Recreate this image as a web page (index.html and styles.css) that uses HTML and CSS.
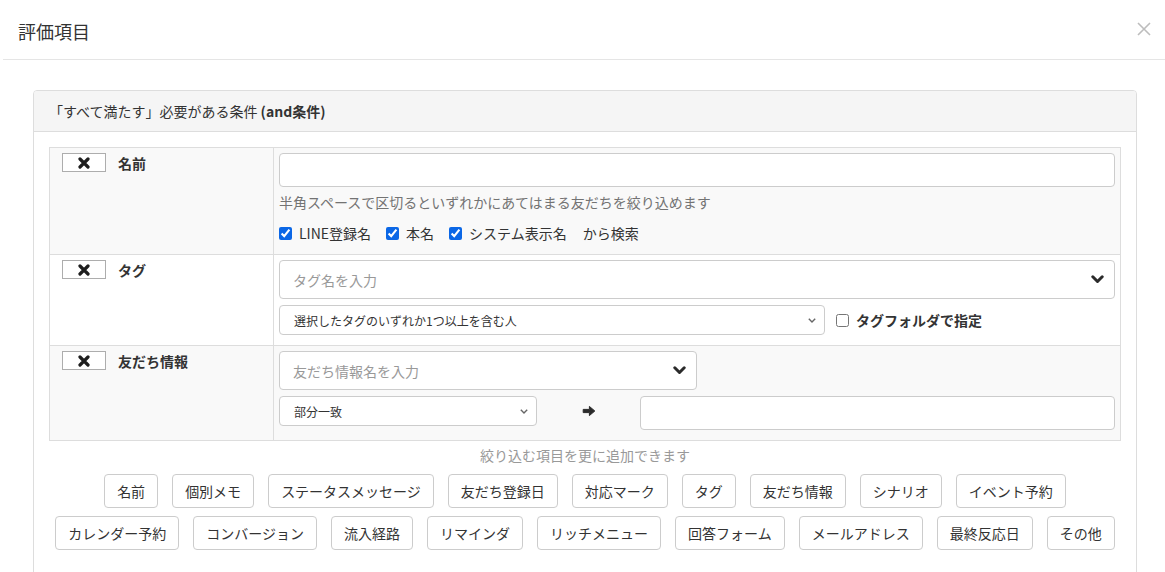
FILE: index.html
```html
<!DOCTYPE html>
<html lang="ja">
<head>
<meta charset="utf-8">
<title>評価項目</title>
<link rel="stylesheet" href="styles.css">
</head>
<body>
<div class="modal">
  <div class="modal-header">
    <h4 class="modal-title">評価項目</h4>
    <button class="close" type="button" aria-label="close">
      <svg width="14" height="14" viewBox="0 0 14 14"><path d="M1 1L13 13M13 1L1 13" stroke="#bdbdbd" stroke-width="1.6" fill="none"/></svg>
    </button>
  </div>
  <div class="modal-body">
    <div class="panel">
      <div class="panel-heading">「すべて満たす」必要がある条件 <b>(and条件)</b></div>
      <div class="panel-body">
        <div class="cond-table">
          <div class="cond-row striped">
            <div class="cond-label">
              <button class="btn-remove" type="button"><svg width="12" height="12" viewBox="0 0 12 12"><path d="M2 2L10 10M10 2L2 10" stroke="#1e1e1e" stroke-width="3.2" stroke-linecap="round" fill="none"/></svg></button>
              <span>名前</span>
            </div>
            <div class="cond-field first">
              <input class="form-control" type="text">
              <p class="help">半角スペースで区切るといずれかにあてはまる友だちを絞り込めます</p>
              <div class="check-row">
                <label class="check"><input type="checkbox" checked>LINE登録名</label>
                <label class="check"><input type="checkbox" checked>本名</label>
                <label class="check"><input type="checkbox" checked>システム表示名</label>
                <span class="from">から検索</span>
              </div>
            </div>
          </div>

          <div class="cond-row">
            <div class="cond-label">
              <button class="btn-remove" type="button"><svg width="12" height="12" viewBox="0 0 12 12"><path d="M2 2L10 10M10 2L2 10" stroke="#1e1e1e" stroke-width="3.2" stroke-linecap="round" fill="none"/></svg></button>
              <span>タグ</span>
            </div>
            <div class="cond-field">
              <div class="select2">
                <span>タグ名を入力</span>
                <svg width="13" height="9" viewBox="0 0 13 9"><path d="M1.8 1.8L6.5 6.5L11.2 1.8" fill="none" stroke="#2b2b2b" stroke-width="3" stroke-linecap="round" stroke-linejoin="round"/></svg>
              </div>
              <div class="line center">
                <div class="select-box select-tag">
                  <select><option>選択したタグのいずれか1つ以上を含む人</option></select>
                  <svg width="8" height="5" viewBox="0 0 8 5"><path d="M0.8 0.8L4 4L7.2 0.8" fill="none" stroke="#666" stroke-width="1.4"/></svg>
                </div>
                <label class="check check-folder"><input type="checkbox">タグフォルダで指定</label>
              </div>
            </div>
          </div>

          <div class="cond-row striped">
            <div class="cond-label">
              <button class="btn-remove" type="button"><svg width="12" height="12" viewBox="0 0 12 12"><path d="M2 2L10 10M10 2L2 10" stroke="#1e1e1e" stroke-width="3.2" stroke-linecap="round" fill="none"/></svg></button>
              <span>友だち情報</span>
            </div>
            <div class="cond-field">
              <div class="select2 half">
                <span>友だち情報名を入力</span>
                <svg width="13" height="9" viewBox="0 0 13 9"><path d="M1.8 1.8L6.5 6.5L11.2 1.8" fill="none" stroke="#2b2b2b" stroke-width="3" stroke-linecap="round" stroke-linejoin="round"/></svg>
              </div>
              <div class="line top">
                <div class="select-box select-op">
                  <select><option>部分一致</option></select>
                  <svg width="8" height="5" viewBox="0 0 8 5"><path d="M0.8 0.8L4 4L7.2 0.8" fill="none" stroke="#666" stroke-width="1.4"/></svg>
                </div>
                <div class="arrow">
                  <svg width="14" height="12" viewBox="0 0 14 12"><path d="M1.2 4.4H7.4V1.4L12.8 6L7.4 10.6V7.6H1.2Z" fill="#2b2b2b" stroke="#2b2b2b" stroke-width="1" stroke-linejoin="round"/></svg>
                </div>
                <input class="form-control value-input" type="text">
              </div>
            </div>
          </div>
        </div>

        <p class="add-hint">絞り込む項目を更に追加できます</p>
        <div class="add-buttons">
          <button class="btn" type="button">名前</button>
          <button class="btn" type="button">個別メモ</button>
          <button class="btn" type="button">ステータスメッセージ</button>
          <button class="btn" type="button">友だち登録日</button>
          <button class="btn" type="button">対応マーク</button>
          <button class="btn" type="button">タグ</button>
          <button class="btn" type="button">友だち情報</button>
          <button class="btn" type="button">シナリオ</button>
          <button class="btn" type="button">イベント予約</button>
          <button class="btn" type="button">カレンダー予約</button>
          <button class="btn" type="button">コンバージョン</button>
          <button class="btn" type="button">流入経路</button>
          <button class="btn" type="button">リマインダ</button>
          <button class="btn" type="button">リッチメニュー</button>
          <button class="btn" type="button">回答フォーム</button>
          <button class="btn" type="button">メールアドレス</button>
          <button class="btn" type="button">最終反応日</button>
          <button class="btn" type="button">その他</button>
        </div>
      </div>
    </div>
  </div>
</div>
</body>
</html>
```

FILE: styles.css
```css
html, body {
  margin: 0;
  padding: 0;
  overflow: hidden;
  background: #fff;
}

body {
  font-family: "Noto Sans CJK JP", "Noto Sans", sans-serif;
  font-size: 14px;
  line-height: 20px;
  color: #333;
}

.modal {
  margin-left: 3px;
  width: 1164px;
}

.modal-header {
  height: 59px;
  border-bottom: 1px solid #e5e5e5;
  display: flex;
  justify-content: space-between;
  align-items: flex-start;
  padding: 0 16px 0 15px;
}

.modal-title {
  margin: 18px 0 0;
  font-size: 18px;
  font-weight: normal;
  line-height: 26px;
}

.close {
  margin-top: 22px;
  width: 14px;
  height: 14px;
  padding: 0;
  border: 0;
  background: none;
  display: flex;
}

.modal-body {
  padding: 30px 30px 0;
}

.panel {
  border: 1px solid #ddd;
  border-radius: 4px;
  min-height: 600px;
}

.panel-heading {
  background: #f5f5f5;
  border-bottom: 1px solid #ddd;
  border-radius: 3px 3px 0 0;
  padding: 10px 15px;
}

.panel-body {
  padding: 15px;
}

.cond-table {
  border: 1px solid #ddd;
}

.cond-row {
  display: grid;
  grid-template-columns: 224px 1fr;
}

.cond-row + .cond-row {
  border-top: 1px solid #ddd;
}

.cond-row.striped {
  background: #f9f9f9;
}

.cond-label {
  border-right: 1px solid #ddd;
  padding: 5px 5px 5px 12px;
  display: flex;
  align-items: flex-start;
  gap: 12px;
  font-weight: bold;
}

.btn-remove {
  width: 44px;
  height: 19px;
  box-sizing: border-box;
  border: 1px solid #adadad;
  background: #fff;
  padding: 0;
  display: flex;
  align-items: center;
  justify-content: center;
}

.cond-field {
  padding: 5px 5px 10px;
}

.cond-field.first {
  padding-bottom: 10px;
}

.form-control {
  display: block;
  width: 100%;
  height: 34px;
  box-sizing: border-box;
  border: 1px solid #ccc;
  border-radius: 4px;
  padding: 6px 12px;
  font: inherit;
  background: #fff;
  margin: 0;
}

.help {
  margin: 5px 0 10px;
  color: #737373;
}

.check-row {
  display: flex;
  align-items: center;
  height: 22px;
  margin-top: 2px;
}

.check {
  display: inline-flex;
  align-items: center;
  margin-right: 15px;
}

.check input[type="checkbox"] {
  margin: 0 7px 0 0;
  width: 13px;
  height: 13px;
  accent-color: #0b67e6;
}

.from {
  margin-left: 1px;
}

.select2 {
  height: 39px;
  box-sizing: border-box;
  border: 1px solid #ccc;
  border-radius: 4px;
  background: #fff;
  display: flex;
  align-items: center;
  justify-content: space-between;
  padding: 0 10px 0 13px;
  color: #999;
}

.select2.half {
  width: 50%;
}

.line {
  display: flex;
  margin-top: 6px;
}

.line.center {
  align-items: center;
}

.line.top {
  align-items: flex-start;
}

.select-box {
  height: 30px;
  box-sizing: border-box;
  border: 1px solid #ccc;
  border-radius: 4px;
  background: #fff;
  display: flex;
  align-items: center;
  padding: 0 8px 0 14px;
  flex: none;
}

.select-box select {
  appearance: none;
  -webkit-appearance: none;
  border: 0;
  background: transparent;
  font-family: "Noto Sans CJK JP", "Noto Sans", sans-serif;
  font-size: 12px;
  color: #333;
  flex: 1;
  padding: 0;
  margin: 0;
  outline: none;
}

.select-tag {
  width: 546px;
}

.check-folder {
  margin-left: 11px;
  font-weight: bold;
}

.select-op {
  width: 258px;
}

.arrow {
  width: 103px;
  height: 30px;
  display: flex;
  align-items: center;
  justify-content: center;
  flex: none;
}

.value-input {
  flex: 1;
  width: auto;
}

.add-hint {
  margin: 4px 0 0;
  text-align: center;
  color: #999;
}

.add-buttons {
  display: flex;
  flex-wrap: wrap;
  justify-content: center;
  gap: 8px 14px;
  margin-top: 9px;
}

.btn {
  height: 34px;
  box-sizing: border-box;
  padding: 6px 12px;
  border: 1px solid #ccc;
  border-radius: 4px;
  background: #fff;
  font-family: inherit;
  font-size: 14px;
  line-height: 20px;
  color: #333;
}
```
